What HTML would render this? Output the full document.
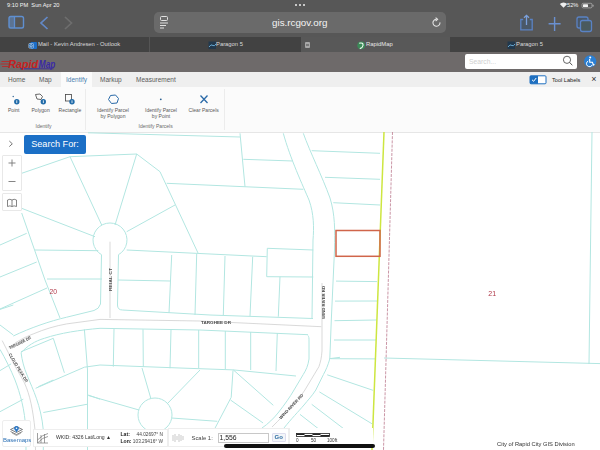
<!DOCTYPE html>
<html><head><meta charset="utf-8">
<style>
*{margin:0;padding:0;box-sizing:border-box}
html,body{width:600px;height:450px;overflow:hidden;background:#fff;font-family:"Liberation Sans",sans-serif}
.a{position:absolute;white-space:nowrap}
.st{color:#f4f4f4;font-size:5.7px;top:2.2px;line-height:7px;font-weight:normal}
.tab{top:37px;height:14px;color:#dadada;font-size:5.85px;line-height:14px}
.rt{top:72px;height:15px;line-height:16.5px;font-size:6.5px;color:#5a5a5a}
.lbl{font-size:5.05px;color:#585858;line-height:6.7px;text-align:center}
.glbl{font-size:5.0px;color:#6a6a6a;line-height:6px}
#wrap{position:absolute;left:0;top:0;width:600px;height:450px;overflow:hidden;filter:blur(0.35px)}
</style></head><body><div id="wrap">
<!-- safari top -->
<div class="a" style="left:0;top:0;width:600px;height:37px;background:#575757"></div>
<div class="a st" style="left:7px">9:10 PM&nbsp;&nbsp;Sun Apr 20</div>
<div class="a" style="left:295.3px;top:4.3px;width:2px;height:2px;border-radius:50%;background:#eee"></div>
<div class="a" style="left:299px;top:4.3px;width:2px;height:2px;border-radius:50%;background:#eee"></div>
<div class="a" style="left:302.5px;top:4.3px;width:2px;height:2px;border-radius:50%;background:#eee"></div>
<div class="a st" style="left:567px">52%</div>
<svg class="a" style="left:0;top:0" width="600" height="37">
 <!-- wifi -->
 <path d="M563.5,7.8 L559.8,4 A5.3,5.3 0 0 1 567.2,4 Z" fill="#eee"/>
 <!-- battery -->
 <rect x="582" y="3.3" width="10" height="4.6" rx="1.3" fill="none" stroke="#bbb" stroke-width="0.7"/>
 <rect x="583" y="4.2" width="5" height="2.8" rx="0.5" fill="#f2f2f2"/>
 <rect x="592.6" y="4.8" width="0.9" height="1.8" fill="#bbb"/>
 <!-- sidebar icon -->
 <rect x="9" y="16.5" width="14.5" height="11.5" rx="1.8" fill="none" stroke="#5f8fd0" stroke-width="1.4"/>
 <rect x="9" y="16.5" width="5.5" height="11.5" fill="#5f8fd0" opacity="0.5"/>
 <line x1="14.5" y1="16.5" x2="14.5" y2="28" stroke="#5f8fd0" stroke-width="1.3"/>
 <!-- back/fwd -->
 <path d="M47.5,17 L41,23 L47.5,29" stroke="#6389c8" stroke-width="1.7" fill="none"/>
 <path d="M65,17 L71.5,23 L65,29" stroke="#6e6e6e" stroke-width="1.7" fill="none"/>
 <!-- share -->
 <rect x="521" y="19.5" width="11" height="10" fill="#4a5868"/>
 <path d="M523.2,19.5 L520.8,19.5 L520.8,29.8 L532.2,29.8 L532.2,19.5 L529.8,19.5" stroke="#5a82c4" stroke-width="1.3" fill="none"/>
 <path d="M526.5,25 L526.5,15.5 M524,17.8 L526.5,15.3 L529,17.8" stroke="#7aa0dc" stroke-width="1.3" fill="none"/>
 <!-- plus -->
 <path d="M554.6,17 L554.6,31 M548.6,23.8 L560.6,23.8" stroke="#6a90d0" stroke-width="1.4" fill="none"/>
 <!-- tabs -->
 <rect x="577" y="17" width="11" height="11" rx="2" fill="#4a5868" stroke="#5a82c4" stroke-width="1.3"/>
 <rect x="580.5" y="20.5" width="11" height="11" rx="2" fill="#4a5a5e" stroke="#5a82c4" stroke-width="1.3"/>
</svg>
<div class="a" style="left:154px;top:12.2px;width:292px;height:20.8px;border-radius:5px;background:#6a6a6a"></div>
<svg class="a" style="left:154px;top:12px" width="20" height="22">
 <rect x="6.5" y="4.5" width="7" height="4" rx="1" fill="none" stroke="#e0e0e0" stroke-width="1"/>
 <line x1="6" y1="11" x2="14" y2="11" stroke="#e0e0e0" stroke-width="1"/>
 <line x1="6" y1="13.5" x2="12" y2="13.5" stroke="#e0e0e0" stroke-width="1"/>
 <line x1="6" y1="16" x2="10" y2="16" stroke="#e0e0e0" stroke-width="1"/>
</svg>
<svg class="a" style="left:0;top:0" width="600" height="37">
 
 <path d="M439.9,22.3 A3.5,3.5 0 1 1 436.6,19.3" stroke="#e4e4e4" stroke-width="1.1" fill="none"/>
 <path d="M435.6,17.6 L437.6,19.3 L435.6,21" stroke="#e4e4e4" stroke-width="1.1" fill="none"/>
</svg>
<div class="a" style="left:272px;top:16px;font-size:9.8px;line-height:14px;color:#f4f4f4">gis.rcgov.org</div>
<!-- tab bar -->
<div class="a" style="left:0;top:37px;width:600px;height:14.5px;background:#424242"></div>
<div class="a" style="left:149px;top:37px;width:1px;height:14.5px;background:#555"></div>
<div class="a" style="left:300.5px;top:37px;width:149.5px;height:14.5px;background:#585858"></div>
<svg class="a" style="left:28px;top:41px" width="10" height="9"><rect x="2.5" y="1" width="6.5" height="7" rx="1" fill="#1c6ec8"/><rect x="0.8" y="2.5" width="4.6" height="4.6" rx="0.6" fill="#0f5eb0" stroke="#eaf2ff" stroke-width="0.5"/><circle cx="3.1" cy="4.8" r="1.2" fill="none" stroke="#fff" stroke-width="0.6"/></svg>
<div class="a tab" style="left:38px">Mail - Kevin Andresen - Outlook</div>
<svg class="a" style="left:207.5px;top:41px" width="9" height="8"><rect x="0.5" y="0.5" width="7.5" height="7.5" fill="#22384c"/><path d="M1,6 Q3,2.5 5,4.5 Q6.5,5.5 8,3" stroke="#6fb4e0" stroke-width="0.9" fill="none"/></svg>
<div class="a tab" style="left:216px">Paragon 5</div>
<div class="a" style="left:304.5px;top:42px;width:5.5px;height:5.5px;background:#a8a8a8;border-radius:1px"></div><div class="a" style="left:306px;top:43.5px;width:2.5px;height:2.5px;background:#7a7a7a"></div>
<svg class="a" style="left:357px;top:41px" width="9" height="9"><circle cx="4.2" cy="4.3" r="3.9" fill="#3c8a58"/><path d="M2.2,2.2 Q6.5,1.2 6,4.5 Q5.5,7 2.8,7.6" stroke="#f4fff4" stroke-width="1.1" fill="none"/></svg>
<div class="a tab" style="left:366px;color:#e6e6e6">RapidMap</div>
<svg class="a" style="left:506.5px;top:41px" width="9" height="8"><rect x="0.5" y="0.5" width="7.5" height="7.5" fill="#22384c"/><path d="M1,6 Q3,2.5 5,4.5 Q6.5,5.5 8,3" stroke="#6fb4e0" stroke-width="0.9" fill="none"/></svg>
<div class="a tab" style="left:516px">Paragon 5</div>
<!-- page header -->
<div class="a" style="left:0;top:51.5px;width:600px;height:20px;background:#6e6a6a"></div>
<svg class="a" style="left:0;top:51px" width="70" height="21">
 <path d="M1.5,10.5 L10,10.5 M0.5,13 L9,13 M2,15.5 L8.5,15.5" stroke="#b82a2a" stroke-width="0.9"/>
 <path d="M20,17.8 L53.5,17.8" stroke="#3a2a9a" stroke-width="0.9"/>
 <text x="8.2" y="16.6" font-family="Liberation Sans" font-style="italic" font-weight="bold" font-size="10" fill="#c42222" textLength="30" lengthAdjust="spacingAndGlyphs">Rapid</text>
 <text x="38.8" y="16.6" font-family="Liberation Sans" font-style="italic" font-weight="bold" font-size="10" fill="#3a2aa6" textLength="16.5" lengthAdjust="spacingAndGlyphs">Map</text>
</svg>
<div class="a" style="left:465px;top:53.5px;width:112px;height:15px;background:#fff;border-radius:2px"></div>
<div class="a" style="left:469px;top:57px;font-size:6.75px;line-height:9px;color:#cfcfcf">Search...</div>
<svg class="a" style="left:560px;top:54px" width="16" height="15">
 <circle cx="7" cy="5.8" r="3.6" fill="none" stroke="#555" stroke-width="0.9"/>
 <line x1="9.6" y1="8.4" x2="12.3" y2="11.3" stroke="#555" stroke-width="1"/>
</svg>
<svg class="a" style="left:583px;top:54px" width="16" height="16">
 <circle cx="7.2" cy="7.3" r="6.1" fill="#2a7fd4"/>
 <circle cx="7.2" cy="3.4" r="1" fill="#fff"/>
 <path d="M6.6,5 L6.8,8.3 L9.4,8.3 L10.4,11 L11.5,10.6" stroke="#fff" stroke-width="1.1" fill="none"/>
 <path d="M5.2,7 A3,3 0 1 0 9.3,10.8" stroke="#fff" stroke-width="1" fill="none"/>
</svg>
<!-- ribbon tabs -->
<div class="a" style="left:0;top:71.5px;width:600px;height:15.5px;background:#efefef"></div>
<div class="a" style="left:60.5px;top:72px;width:31.5px;height:15px;background:#fbfbfb"></div>
<div class="a rt" style="left:8px">Home</div>
<div class="a rt" style="left:39px">Map</div>
<div class="a rt" style="left:66px;color:#4a7fb0">Identify</div>
<div class="a rt" style="left:100px">Markup</div>
<div class="a rt" style="left:136px">Measurement</div>
<svg class="a" style="left:529px;top:74.6px" width="18" height="10">
 <rect x="1" y="0.8" width="16" height="8" rx="1" fill="#fff" stroke="#1e6fc0" stroke-width="1"/>
 <rect x="1" y="0.8" width="8" height="8" fill="#1e6fc0"/>
 <path d="M3,4.8 L4.6,6.3 L7.2,3" stroke="#fff" stroke-width="1" fill="none"/>
</svg>
<div class="a rt" style="left:552px;font-size:5.6px;color:#222">Tool Labels</div>
<div class="a rt" style="left:591.3px;top:71px;font-size:9px;color:#333">&#215;</div>
<!-- ribbon -->
<div class="a" style="left:0;top:87px;width:600px;height:45.5px;background:#fbfbfb"></div>
<div class="a" style="left:0;top:132px;width:600px;height:1px;background:#e6e6e6"></div>
<div class="a" style="left:85px;top:89px;width:0.8px;height:41px;background:#ececec"></div>
<div class="a" style="left:223.5px;top:89px;width:0.8px;height:41px;background:#ececec"></div>
<svg class="a" style="left:0;top:87px" width="230" height="20">
 <circle cx="13.2" cy="9.5" r="0.7" fill="#2a5f90"/>
 <circle cx="16.8" cy="14.7" r="2.7" fill="#1f6aa8"/>
 <rect x="16.4" y="13.3" width="0.8" height="2.8" fill="#fff"/>
 <path d="M35.5,7.5 L40,7 L42.5,9.5 L41,12.5 L37,12 Z" fill="none" stroke="#444" stroke-width="0.8"/>
 <circle cx="43.3" cy="14.7" r="2.7" fill="#1f6aa8"/>
 <rect x="42.9" y="13.3" width="0.8" height="2.8" fill="#fff"/>
 <rect x="65.5" y="7.5" width="6" height="6.5" fill="none" stroke="#444" stroke-width="0.8"/>
 <circle cx="72" cy="14.7" r="2.7" fill="#1f6aa8"/>
 <rect x="71.6" y="13.3" width="0.8" height="2.8" fill="#fff"/>
 <path d="M110.5,8.5 L115.5,8 L118.5,11.5 L117,16 L111.5,16.5 L108.5,12.5 Z" fill="none" stroke="#2a6aa8" stroke-width="1"/>
 <circle cx="160.8" cy="12.3" r="0.9" fill="#2a5f90"/>
 <path d="M200.5,8.5 L207.5,16 M207.5,8.5 L200.5,16" stroke="#2a6aa8" stroke-width="1.3"/>
</svg>
<div class="a lbl" style="left:8px;top:106.5px">Point</div>
<div class="a lbl" style="left:31.5px;top:106.5px">Polygon</div>
<div class="a lbl" style="left:58.5px;top:106.5px">Rectangle</div>
<div class="a glbl" style="left:35.5px;top:122.5px">Identify</div>
<div class="a lbl" style="left:97px;top:106.5px">Identify Parcel<br>by Polygon</div>
<div class="a lbl" style="left:145px;top:106.5px">Identify Parcel<br>by Point</div>
<div class="a lbl" style="left:188.5px;top:106.5px">Clear Parcels</div>
<div class="a glbl" style="left:138.5px;top:122.5px">Identify Parcels</div>
<!-- map -->
<svg class="a" style="left:0;top:0" width="600" height="450" viewBox="0 0 600 450">
<g fill="none" stroke="#b2e6e1" stroke-width="1">
<!-- top line -->
<path d="M88,132.8 L240,137"/>
<!-- cul-de-sac north block -->
<path d="M21.7,173.3 L70,156.7 L136.7,154"/>
<path d="M70,156.7 L101.7,225"/>
<path d="M136.7,154 L115,225"/>
<path d="M136.7,154 L160,171.7 L198,253"/>
<path d="M166.7,183.3 L303.3,189.3"/>
<path d="M126.7,231.7 L175,205"/>
<path d="M21.7,208.3 L95,236.7"/>
<path d="M21.7,213 L45,280 L60,318"/>
<path d="M0,245 L26.7,233.3"/>
<path d="M0,277 L36.7,262"/>
<path d="M35,250 L98.3,250.7"/>
<path d="M126.7,250 L266.7,256.7"/>
<path d="M171.7,255 L169,313"/>
<!-- cul-de-sac circle & stem -->
<path d="M101.5,254.7 A17,17 0 1 1 118.5,254.7"/>
<path d="M101.5,254.7 L100.5,304 Q99,309 94,310.5 L66.7,317.2 C50,321 30,328 13.3,336"/>
<path d="M0,325 L13.3,335"/>
<path d="M0,309.4 L13.3,305"/>
<path d="M118.5,254.7 L117.5,305 Q117.5,310 122.5,310 L210,315 L313,318.5"/>
<path d="M47,279 L102,279"/>
<path d="M118,280 L170,281"/>
<path d="M0,309 L47,288"/>
<!-- block north of targhee east -->
<path d="M240,133.3 L245,186.7"/>
<path d="M243.3,159.3 L293,161"/>
<path d="M196.7,254 L195,315"/>
<path d="M225,256 L223.3,315"/>
<path d="M252.7,256.7 L250,316"/>
<path d="M267.3,248.3 L313.3,250"/>
<path d="M267.3,248.3 L266.7,276.7 L313.3,277"/>
<path d="M280,276.7 L278.3,316.7"/>
<!-- Wind River road edges -->
<path d="M283.3,133.3 C290,158 303,186 309,200 C314,214 314,228 313,240 L312,318"/>
<path d="M303.3,133.3 C310,152 322,176 330,198 C335,214 335,230 334.5,250 L331.3,320 L329.8,358.9 C328,365 326,370 323.5,374.4 L315.8,390 C312,396 308,400 304,405 C298,412 292,418 284,428"/>
<path d="M308,335.5 C309,337 309,338 309,341 L309,359 C308,366 306,370 303.3,374.4 L294,390 C290,397 285,404 278,413 C274,418 268,424 262,428"/>
<!-- east parcels -->
<path d="M311.7,150.7 L380,153.3"/>
<path d="M325,177.3 L380,179.3"/>
<path d="M333.3,202.7 L380,205"/>
<path d="M336,281.1 L377,281.6"/>
<path d="M335,301.1 L377,301"/>
<path d="M334.5,320.7 L376,320"/>
<path d="M334,340 L376,340"/>
<path d="M331,358.7 L375,358.9"/>
<path d="M327.2,374.8 L373,390.3"/>
<path d="M319.4,391.9 L372,423.8"/>
<path d="M311.7,404.3 L348,432"/>
<path d="M300,414.4 L320,430"/>
<!-- targhee -->
<path d="M308,334.7 L200,330 L100,328.3 C80,330 60,333 44.4,338.3 C35,341 27,346 21.1,352.8 C22,360 24,368 27,375 C33,390 41,405 43.3,430 L43.3,450"/>
<path d="M0,349.4 C5,358 11,370 15,380 C20,393 25,410 25.8,430 L26,450"/>
<path d="M21.1,351.7 L53.3,338.3 L64.4,372.8"/>
<!-- south of targhee -->
<path d="M0,370.6 L11.1,363.9"/>
<path d="M0,411.7 L23.3,399.2"/>
<path d="M38.3,386.7 L53.3,380"/>
<path d="M35.6,388.3 L84.4,367.2 L100,365 L180,368 L233.3,369.9 L296,376"/>
<path d="M84.4,329.4 L87.5,370 L87.5,450"/>
<path d="M114,329 L113.3,366.7"/>
<path d="M143,329.3 L143.3,366.7"/>
<path d="M171,330 L170,368.3"/>
<path d="M198.7,330 L198.7,368"/>
<path d="M225.3,331 L225.3,369"/>
<path d="M250.7,332 L250.7,370"/>
<path d="M277.3,333 L276,371"/>
<path d="M142,368 L151,399"/>
<path d="M88.3,395.5 L139,410"/>
<path d="M43.3,412.5 L87.5,404.2"/>
<path d="M88.3,395 L100,399.2"/>
<circle cx="155" cy="415" r="17"/>
<path d="M167,404 L200,370"/>
<path d="M171.5,418 L217.3,421.3"/>
<path d="M233,370.5 L231.2,397.3 L214.9,428.4"/>
<path d="M233.3,369.9 L273.3,405.3"/>
<path d="M230.5,400 L263.1,423"/>
<path d="M329.3,358.7 L340,357.3"/>
<!-- right side -->
<path d="M384,358 L600,363.6"/>
<path d="M592,132 L589,364"/>
</g>
<g fill="none" stroke="#cfcfcf" stroke-width="0.8">
<path d="M110,241.7 L110,318"/>
<path d="M8.9,348.3 C15,342 25,337 33.3,333.9 C45,329 55,326 66.7,323.9 L100,319.4 L200,321 L321.3,326.7"/>
<path d="M2.2,340.6 C6,348 10,356 13.3,362.8 C18,372 22,378 24.4,382.8 C30,395 33,410 35,430 L35.5,450"/>
<path d="M322,283 L322,351 C321.5,358 320.5,362 318.9,366.7 L304.9,390 C301,396 297,401 292,406 C286,413 280,419 272,427"/>
</g>

<path d="M384,132 L372,450" stroke="#cde640" stroke-width="1.5" fill="none"/>
<path d="M392.5,132 L383.5,450" stroke="#c48a9c" stroke-width="0.9" stroke-dasharray="3,1.2" fill="none"/>
<rect x="336" y="230.5" width="44" height="25.8" fill="none" stroke="#d0654a" stroke-width="1.5"/>
<g font-family="Liberation Sans" font-size="4.3" fill="#4a4a4a" font-weight="bold">
<text transform="translate(111.5,291) rotate(-90)" textLength="23" lengthAdjust="spacingAndGlyphs">REIAL CT</text>
<text transform="translate(10,349.5) rotate(-27)" textLength="24" lengthAdjust="spacingAndGlyphs">TARGHEE DR</text>
<text transform="translate(8.5,354.5) rotate(58.5)" textLength="33" lengthAdjust="spacingAndGlyphs">CLOUD PEAK DR</text>
<text x="201" y="324.2" textLength="30" lengthAdjust="spacingAndGlyphs">TARGHEE DR</text>
<text transform="translate(324.5,319) rotate(-90)" textLength="33" lengthAdjust="spacingAndGlyphs">WIND RIVER RD</text>
<text transform="translate(281,419.5) rotate(-46.5)" textLength="33" lengthAdjust="spacingAndGlyphs">WIND RIVER RD</text>
</g>
<text x="49.6" y="293.8" font-size="6.8" fill="#b03848" font-family="Liberation Sans">20</text>
<text x="488.3" y="295.9" font-size="7" fill="#b03848" font-family="Liberation Sans">21</text>
</svg>
<!-- left controls -->
<div class="a" style="left:0;top:133px;width:21.5px;height:19.5px;background:#fff"></div>
<div class="a" style="left:2px;top:154.5px;width:19.5px;height:36.5px;background:#fff;border:1px solid #e8e8e8;border-radius:1px"></div>
<div class="a" style="left:2px;top:193px;width:19.5px;height:18px;background:#fff;border:1px solid #e8e8e8;border-radius:1px"></div>
<svg class="a" style="left:0;top:133px" width="24" height="80">
 <path d="M9.3,8 L12.3,10.8 L9.3,13.6" stroke="#666" stroke-width="0.9" fill="none"/>
 <path d="M12,26.5 L12,33.5 M8.5,30 L15.5,30" stroke="#777" stroke-width="0.9"/>
 <path d="M8.5,48.5 L15.5,48.5" stroke="#777" stroke-width="0.9"/>
 <path d="M7.5,67 Q10,65.5 12,67 Q14,65.5 16.5,67 L16.5,73.5 Q14,72.2 12,73.5 Q10,72.2 7.5,73.5 Z M12,67 L12,73.5" stroke="#666" stroke-width="0.8" fill="none"/>
</svg>
<div class="a" style="left:24px;top:135px;width:62px;height:19px;background:#1b6fc6;border-radius:2px;color:#fff;font-size:9.1px;line-height:19px;text-align:center">Search For:</div>
<!-- bottom toolbar -->
<div class="a" style="left:2px;top:420px;width:28.5px;height:26.5px;background:#fff;border:1px solid #eee;border-radius:2px"></div>
<svg class="a" style="left:9px;top:424px" width="16" height="14">
 <path d="M7.5,2.5 L13.5,5.5 L7.5,8.5 L1.5,5.5 Z" fill="#e8eef4" stroke="#555" stroke-width="0.7"/>
 <path d="M1.5,7.5 L7.5,10.5 L13.5,7.5" fill="none" stroke="#555" stroke-width="0.7"/>
 <path d="M3,9 L7.5,11.5 L12,9" fill="none" stroke="#777" stroke-width="0.6"/>
 <circle cx="7.5" cy="4.3" r="2.3" fill="#2a78c8"/>
 <path d="M5.8,5.5 L7.5,8.5 L9.2,5.5" fill="#2a78c8"/>
 <circle cx="7.5" cy="4.2" r="0.8" fill="#fff"/>
</svg>
<div class="a" style="left:3px;top:436.5px;font-size:6px;line-height:7px;color:#2a6fb5">Basemaps</div>
<div class="a" style="left:33px;top:428.5px;width:134.5px;height:18.5px;background:#fff;border:1px solid #eee"></div>
<svg class="a" style="left:36px;top:431px" width="14" height="14">
 <path d="M1.5,2 L1.5,12 L12,12 M1.5,9 Q6,4 12,2.5 M1.5,12 Q7,6 12,5.5 M5,4 L5,12 M8.5,3 L8.5,12" stroke="#777" stroke-width="0.7" fill="none"/>
</svg>
<div class="a" style="left:56px;top:433px;font-size:5.1px;line-height:8px;color:#333">WKID: 4326 Lat/Long &#9650;</div>
<div class="a" style="left:120.5px;top:431px;font-size:5.1px;line-height:7px;color:#222;font-weight:bold">Lat:</div>
<div class="a" style="left:120.5px;top:437.5px;font-size:5.1px;line-height:7px;color:#222;font-weight:bold">Lon:</div>
<div class="a" style="left:123px;top:431px;width:40px;text-align:right;font-size:4.75px;line-height:7px;color:#444">44.02697&#176; N</div>
<div class="a" style="left:123px;top:437.5px;width:40px;text-align:right;font-size:4.75px;line-height:7px;color:#444">103.29416&#176; W</div>
<div class="a" style="left:168px;top:428px;width:120.5px;height:19px;background:#fff;border:1px solid #eee"></div>
<svg class="a" style="left:171px;top:432px" width="14" height="12">
 <path d="M2,3 L2,9 M4,2 L4,10 M6,4 L6,8 M8,2 L8,10 M10,3 L10,9 M12,4 L12,8" stroke="#bbb" stroke-width="0.8"/>
</svg>
<div class="a" style="left:191.5px;top:433.5px;font-size:5.9px;line-height:8px;color:#444">Scale 1:</div>
<div class="a" style="left:217.5px;top:432.5px;width:51px;height:10.5px;background:#fff;border:1px solid #c8c8c8"></div>
<div class="a" style="left:219.5px;top:434px;font-size:6.8px;line-height:8px;color:#222">1,556</div>
<div class="a" style="left:272px;top:433px;width:13.5px;height:9px;background:#f3f6f9;border:1px solid #dde;border-radius:1px;color:#2a6aa0;font-size:6px;line-height:7px;text-align:center;font-weight:bold">Go</div>
<div class="a" style="left:289px;top:428px;width:84px;height:19px;background:#fff;border-left:1px solid #eee"></div>
<svg class="a" style="left:294px;top:431px" width="50" height="14">
 <rect x="2.5" y="2.5" width="33" height="3" fill="#fff" stroke="#222" stroke-width="0.8"/>
 <rect x="2.5" y="2.5" width="8" height="1.5" fill="#222"/>
 <rect x="18.5" y="2.5" width="8" height="1.5" fill="#222"/>
 <rect x="10.5" y="4" width="8" height="1.5" fill="#222"/>
 <rect x="26.5" y="4" width="9" height="1.5" fill="#222"/>
 <text x="2" y="10.5" font-size="4.6" fill="#333" font-family="Liberation Sans">0</text>
 <text x="17" y="10.5" font-size="4.6" fill="#333" font-family="Liberation Sans">50</text>
 <text x="33" y="10.5" font-size="4.6" fill="#333" font-family="Liberation Sans">100ft</text>
</svg>
<div class="a" style="left:224px;top:444px;width:151px;height:3.5px;border-radius:2px;background:#111"></div>
<div class="a" style="left:497px;top:439.5px;font-size:5.75px;line-height:8px;color:#333">City of Rapid City GIS Division</div>
</body></html>
